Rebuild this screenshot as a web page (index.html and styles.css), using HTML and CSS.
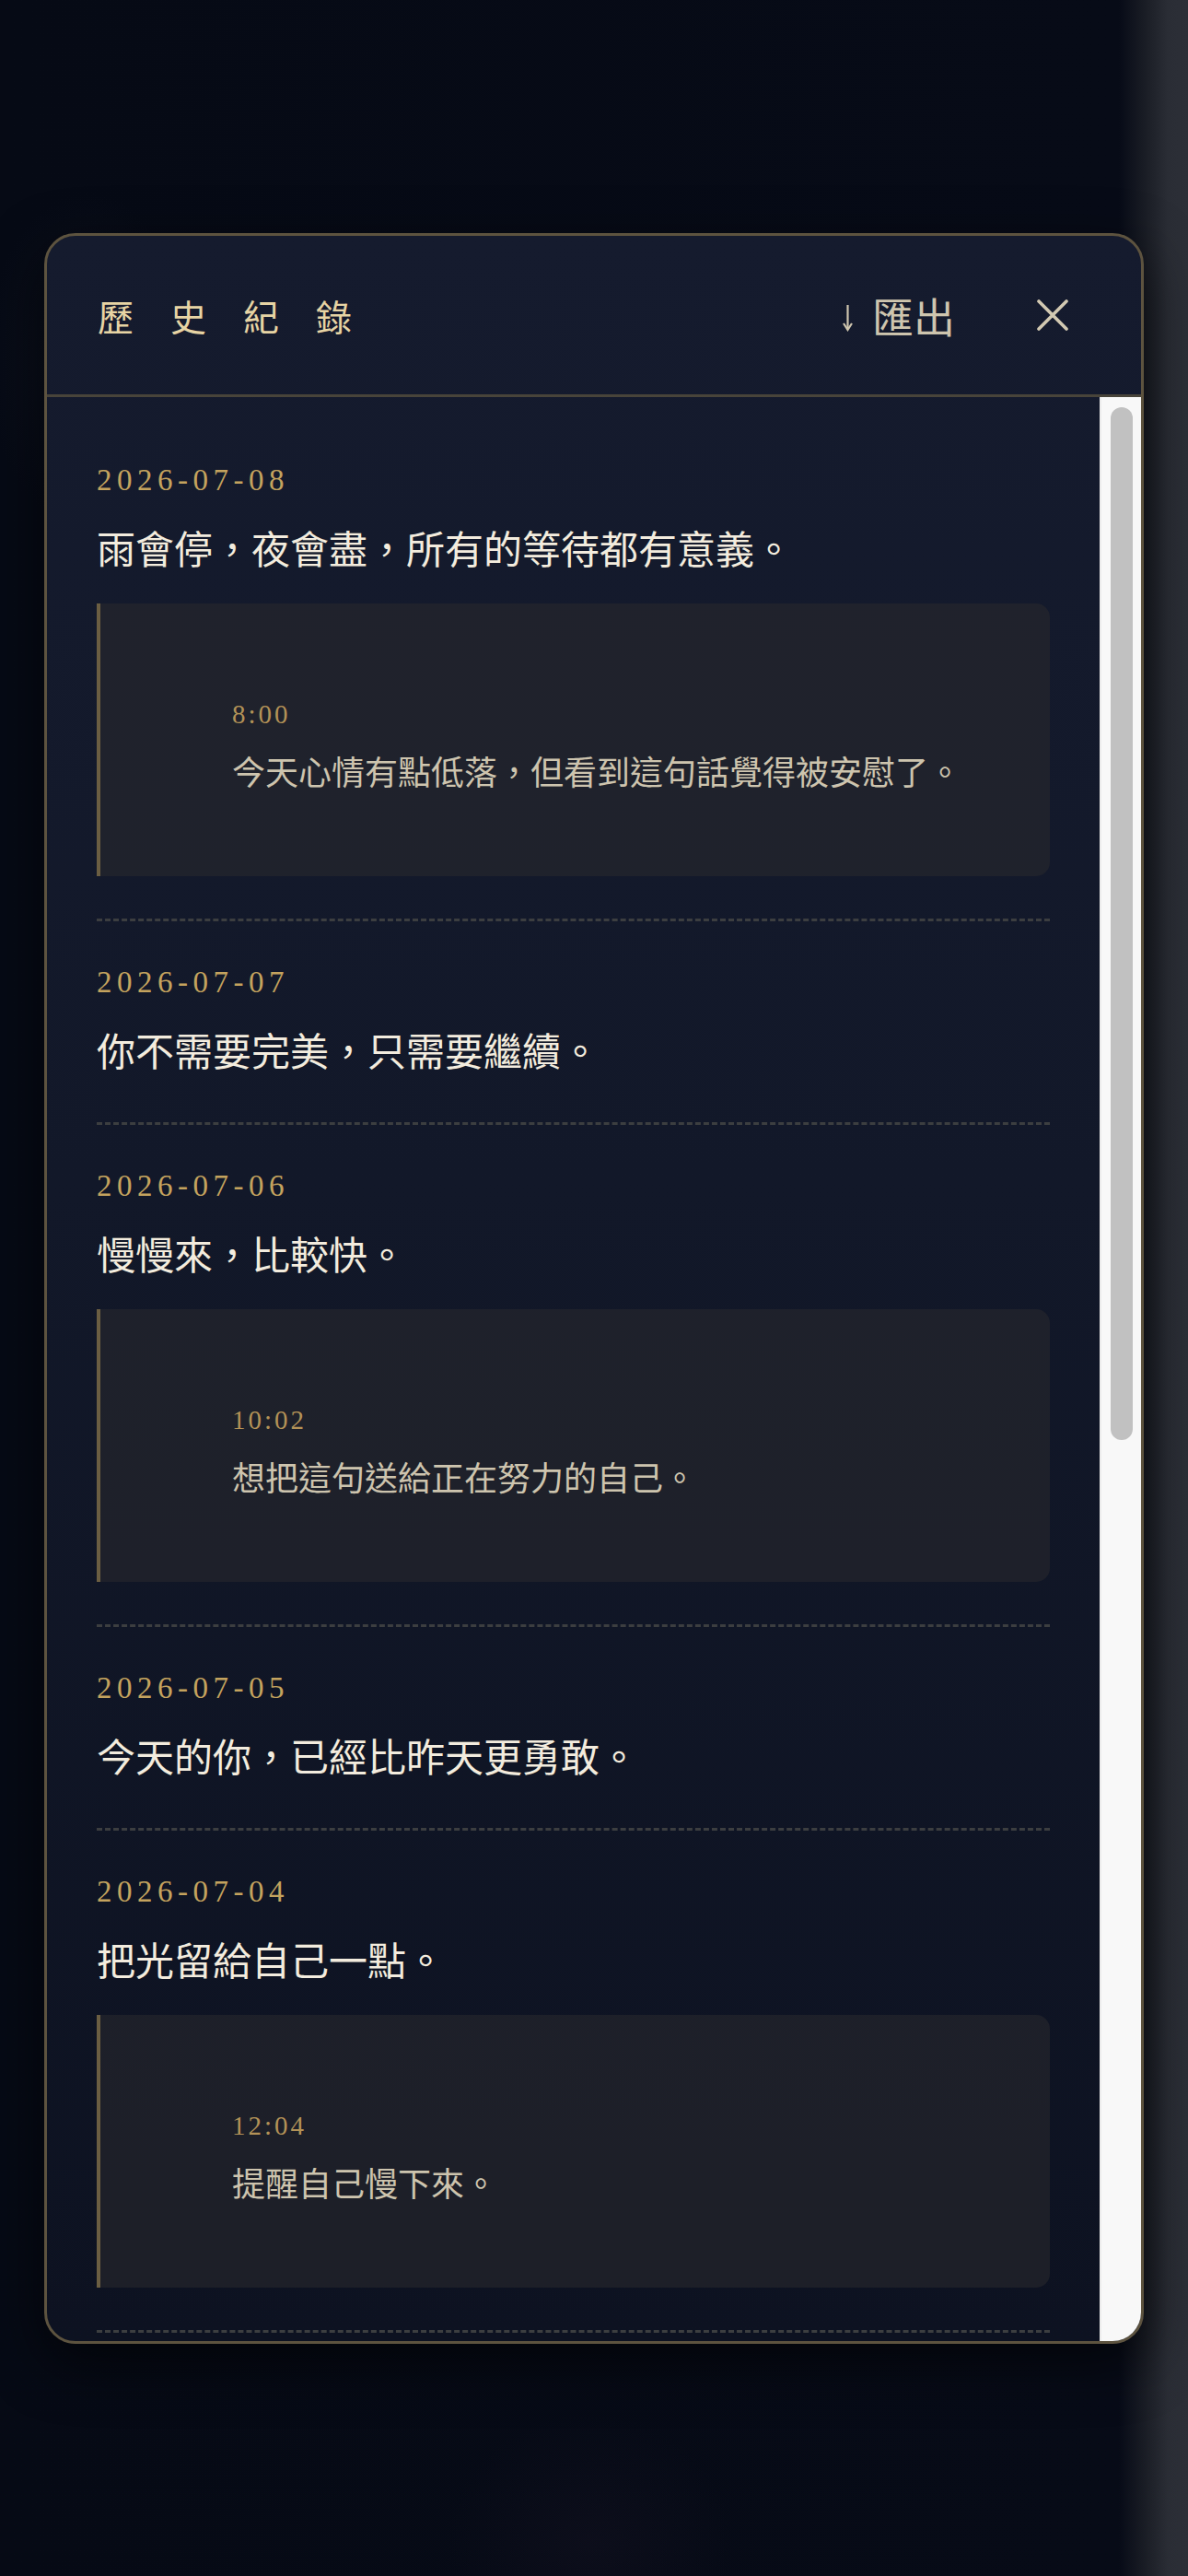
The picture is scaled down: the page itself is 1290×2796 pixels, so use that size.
FILE: index.html
```html
<!DOCTYPE html>
<html lang="zh-Hant">

<head>
    <meta charset="UTF-8">
    <meta name="viewport" content="width=device-width, initial-scale=1.0">
    <title>歷史紀錄</title>
    <link rel="stylesheet" href="styles.css">
</head>

<body>

    <div class="backdrop">
        <div class="history-modal">

            <header class="modal-header">
                <h2 class="modal-title">歷史紀錄</h2>
                <button class="export-btn" type="button">
                    <svg class="export-arrow" viewBox="0 0 15 30" width="15" height="30">
                        <path d="M7.5 1 V27" stroke="currentColor" stroke-width="2.2" fill="none" />
                        <path d="M3 21 L7.5 28 L12 21" stroke="currentColor" stroke-width="2.2" fill="none" />
                    </svg>
                    <span>匯出</span>
                </button>
                <button class="close-btn" type="button" aria-label="關閉">
                    <svg viewBox="0 0 34 34" width="34" height="34">
                        <path d="M2 2 L32 32 M32 2 L2 32" stroke="currentColor" stroke-width="3.6" stroke-linecap="round" fill="none" />
                    </svg>
                </button>
            </header>

            <div class="modal-body">
                <div class="history-list">

                    <div class="entry">
                        <div class="entry-date">2026-07-08</div>
                        <p class="entry-quote">雨會停，夜會盡，所有的等待都有意義。</p>
                        <div class="entry-note">
                            <div class="note-time">8:00</div>
                            <p class="note-text">今天心情有點低落，但看到這句話覺得被安慰了。</p>
                        </div>
                    </div>

                    <div class="entry">
                        <div class="entry-date">2026-07-07</div>
                        <p class="entry-quote">你不需要完美，只需要繼續。</p>
                    </div>

                    <div class="entry">
                        <div class="entry-date">2026-07-06</div>
                        <p class="entry-quote">慢慢來，比較快。</p>
                        <div class="entry-note">
                            <div class="note-time">10:02</div>
                            <p class="note-text">想把這句送給正在努力的自己。</p>
                        </div>
                    </div>

                    <div class="entry">
                        <div class="entry-date">2026-07-05</div>
                        <p class="entry-quote">今天的你，已經比昨天更勇敢。</p>
                    </div>

                    <div class="entry">
                        <div class="entry-date">2026-07-04</div>
                        <p class="entry-quote">把光留給自己一點。</p>
                        <div class="entry-note">
                            <div class="note-time">12:04</div>
                            <p class="note-text">提醒自己慢下來。</p>
                        </div>
                    </div>

                </div>

                <!-- scrollbar drawn by hand, list is scrolled to the top -->
                <div class="scroll-track">
                    <div class="scroll-thumb"></div>
                </div>
            </div>

        </div>
    </div>

</body>

</html>
```

FILE: styles.css
```css
body {
    margin: 0;
    padding: 0;
    min-height: 100vh;
    font-family: "Noto Sans CJK TC", "Noto Sans", sans-serif;
    background:
        radial-gradient(ellipse 160px 260px at 95px 390px, rgba(40, 46, 60, 0.18), transparent 70%),
        radial-gradient(ellipse 300px 160px at 620px 540px, rgba(50, 52, 60, 0.16), transparent 70%),
        radial-gradient(ellipse 220px 200px at 640px 2760px, rgba(40, 30, 50, 0.18), transparent 70%),
        linear-gradient(90deg, #060a15 0, #070b17 1215px, #1b1e26 1245px, #2a2d35 1268px, #2c2f37 100%);
    color: #f2ebdd;
}

.backdrop {
    display: flex;
    justify-content: center;
    align-items: flex-start;
    padding-top: 253px;
}

.history-modal {
    width: 1194px;
    height: 2291px;
    box-sizing: border-box;
    border: 3px solid #5d533f;
    border-radius: 34px;
    overflow: hidden;
    display: flex;
    flex-direction: column;
    background: linear-gradient(180deg, #151b2e 0%, #121829 45%, #0d1221 100%);
    box-shadow: 0 20px 60px rgba(0, 0, 0, 0.6);
}

/* header */
.modal-header {
    height: 172px;
    flex-shrink: 0;
    display: flex;
    align-items: center;
    padding: 0 79px 0 55px;
    border-bottom: 3px solid #48443a;
}

.modal-title {
    flex: 1;
    margin: 0;
    font-size: 39px;
    font-weight: 400;
    letter-spacing: 40px;
    color: #e7d4a4;
}

.export-btn {
    display: flex;
    align-items: center;
    gap: 19px;
    background: none;
    border: none;
    padding: 0;
    margin-right: 89px;
    font-family: "Noto Sans CJK TC", sans-serif;
    font-size: 45px;
    color: #cec5ae;
    cursor: pointer;
}

.export-arrow {
    margin-top: 6px;
}

.close-btn {
    display: flex;
    background: none;
    border: none;
    padding: 0;
    color: #d2c9b2;
    cursor: pointer;
}

/* body + list */
.modal-body {
    flex: 1;
    min-height: 0;
    display: flex;
}

.history-list {
    flex: 1;
    overflow: hidden;
    padding: 24px 54px 0;
}

.scroll-track {
    width: 45px;
    flex-shrink: 0;
    background: #f8f8f8;
    box-shadow: inset 2px 0 0 #ececec;
}

.scroll-thumb {
    margin: 11px 9px 0 12px;
    height: 1121px;
    border-radius: 12px;
    background: #c1c1c1;
}

.entry {
    padding: 46px 0;
    border-bottom: 3px dashed #3c3e40;
}

.entry-date {
    font-family: "Liberation Serif", "DejaVu Serif", serif;
    font-variant-numeric: oldstyle-nums;
    font-size: 33px;
    line-height: 40px;
    letter-spacing: 5.5px;
    color: #c4a35e;
}

.entry-quote {
    margin: 20px 0 0;
    font-size: 42px;
    line-height: 66px;
    color: #f3ecde;
}

.entry-note {
    margin-top: 28px;
    height: 296px;
    box-sizing: border-box;
    padding: 102px 40px 0 143px;
    background: rgba(40, 40, 45, 0.6);
    border-left: 4px solid #6b5e42;
    border-radius: 0 15px 15px 0;
}

.note-time {
    font-family: "Liberation Serif", "DejaVu Serif", serif;
    font-variant-numeric: oldstyle-nums;
    font-size: 29px;
    line-height: 36px;
    letter-spacing: 3px;
    color: #b39257;
}

.note-text {
    margin: 14px 0 0;
    font-size: 36px;
    line-height: 58px;
    color: #cdc4ae;
}
```
